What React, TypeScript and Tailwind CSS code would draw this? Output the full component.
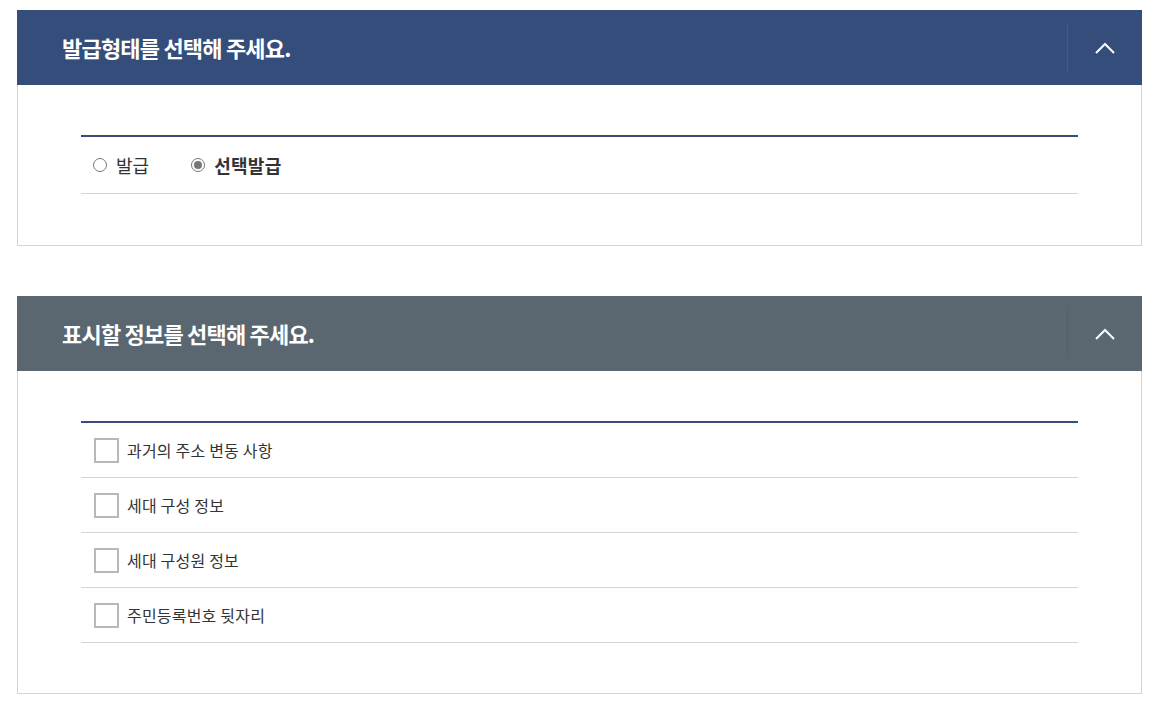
import { useState } from "react"

const font = { fontFamily: '"Noto Sans CJK KR", "Noto Sans", sans-serif' }

function Chevron() {
  return (
    <svg width="20" height="12" viewBox="0 0 20 12" fill="none">
      <path d="M1 11 L10 2 L19 11" stroke="white" strokeWidth="2" />
    </svg>
  )
}

function PanelHeader({ title, tone }: { title: string; tone: "blue" | "gray" }) {
  return (
    <div
      className={`flex h-[75px] items-center ${tone === "blue" ? "bg-[#344d7a]" : "bg-[#5a6670]"}`}
    >
      <h2 className="flex-1 pl-[45px] text-[22px] font-bold tracking-[-0.8px] text-white">{title}</h2>
      <div className={`h-[49px] w-px ${tone === "blue" ? "bg-[#42598a]" : "bg-[#4f5f78]"}`} />
      <button className="flex h-full w-[74px] items-center justify-center">
        <Chevron />
      </button>
    </div>
  )
}

const options = ["과거의 주소 변동 사항", "세대 구성 정보", "세대 구성원 정보", "주민등록번호 뒷자리"]

export default function App() {
  const [type, setType] = useState("select")
  const [checked, setChecked] = useState<boolean[]>([false, false, false, false])

  return (
    <div className="min-h-screen bg-white px-[17px] pt-[10px]" style={font}>
      {/* 발급형태 */}
      <section>
        <PanelHeader title="발급형태를 선택해 주세요." tone="blue" />
        <div className="border border-t-0 border-[#d5d5d5] px-[63px] pt-[50px] pb-[51px]">
          <div className="flex h-[59px] items-center border-t-2 border-b border-t-[#344d7a] border-b-[#d5d5d5] pl-[12px]">
            <label className="flex items-center gap-[9px] text-[18px] text-[#333]" onClick={() => setType("all")}>
              <span className="flex h-[14px] w-[14px] items-center justify-center rounded-full border border-[#777] bg-white">
                {type === "all" && <span className="h-[8px] w-[8px] rounded-full bg-[#777]" />}
              </span>
              발급
            </label>
            <label
              className={`ml-[42px] flex items-center gap-[9px] text-[18px] tracking-[0.3px] text-[#333] ${type === "select" ? "font-bold" : ""}`}
              onClick={() => setType("select")}
            >
              <span className="flex h-[14px] w-[14px] items-center justify-center rounded-full border border-[#777] bg-white">
                {type === "select" && <span className="h-[8px] w-[8px] rounded-full bg-[#777]" />}
              </span>
              선택발급
            </label>
          </div>
        </div>
      </section>

      {/* 표시할 정보 */}
      <section className="mt-[50px]">
        <PanelHeader title="표시할 정보를 선택해 주세요." tone="gray" />
        <div className="border border-t-0 border-[#d5d5d5] px-[63px] pt-[50px] pb-[50px]">
          <ul className="border-t-2 border-[#344d7a]">
            {options.map((o, i) => (
              <li key={o} className="flex h-[55px] items-center gap-[8px] border-b border-[#d5d5d5] pl-[13px]">
                <span
                  className="h-[25px] w-[25px] border-2 border-[#b8b8b8] bg-white"
                  onClick={() => setChecked(c => c.map((v, j) => (j === i ? !v : v)))}
                />
                <span className="text-[16px] tracking-[0.2px] text-[#333]">{o}</span>
              </li>
            ))}
          </ul>
        </div>
      </section>
    </div>
  )
}
